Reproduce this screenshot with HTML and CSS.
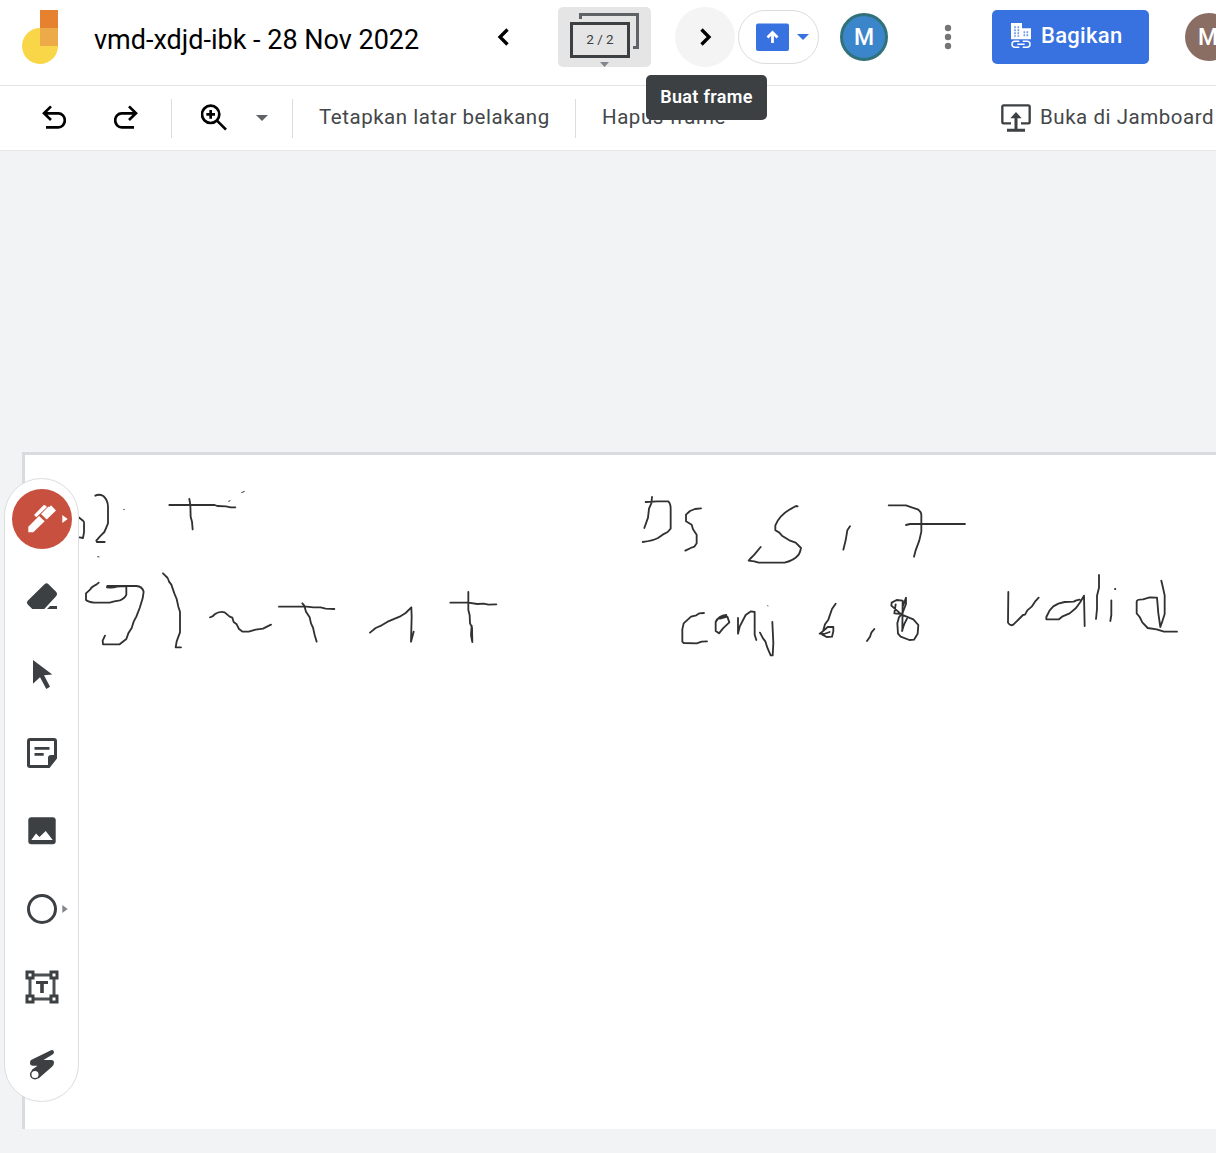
FILE: index.html
```html
<!DOCTYPE html>
<html lang="id">
<head>
<meta charset="utf-8">
<title>vmd-xdjd-ibk - 28 Nov 2022</title>
<link rel="stylesheet" href="styles.css">
</head>
<body>
<header class="header">
  <svg class="logo" width="36" height="55" viewBox="66 30 108 165">
    <path fill="#f8d648" d="M120 84H174V140A54 54 0 1 1 120 84Z"/>
    <path fill="#e6812f" d="M120 30H174V84H120Z"/>
    <path fill="#ecab48" d="M120 84H174V138H120Z"/>
  </svg>
  <h1 class="title">vmd-xdjd-ibk - 28 Nov 2022</h1>
  <button class="round" aria-label="Frame sebelumnya">
    <svg width="60" height="60" viewBox="0 0 60 60"><path class="chevron" d="M33.500 22.500L26 30L33.500 37.500"/></svg>
  </button>
  <button class="frames">
    <svg class="frames-art" width="93" height="60" viewBox="0 0 93 60">
      <path fill="none" stroke="#5f6368" stroke-width="3" d="M22.500 12V7.500H79.500V40.500H75"/>
      <rect x="13.500" y="16.500" width="57" height="33" fill="none" stroke="#3c4043" stroke-width="3"/>
      <path fill="#80868b" d="M42 55H51L46.500 60Z"/>
    </svg>
    <span class="frames-count">2 / 2</span>
  </button>
  <div class="next">
    <button class="round round-hover" aria-label="Buat frame">
      <svg width="60" height="60" viewBox="0 0 60 60"><path class="chevron" d="M26.500 22.500L34 30L26.500 37.500"/></svg>
    </button>
    <div class="tooltip">Buat frame</div>
  </div>
  <button class="present" aria-label="Presentasikan">
    <svg width="79" height="52" viewBox="0 0 79 52">
      <rect x="17" y="12.500" width="33" height="27.500" rx="2" fill="#3871e0"/>
      <path fill="none" stroke="#fff" stroke-width="2.800" d="M33.500 32V22M28.500 26.500L33.500 21.500L38.500 26.500"/>
      <path fill="#3871e0" d="M58 23H70L64 29Z"/>
    </svg>
  </button>
  <div class="avatar avatar-blue">M</div>
  <button class="more" aria-label="Lainnya">
    <svg width="60" height="60" viewBox="0 0 60 60" fill="#757575"><circle cx="30" cy="21" r="3.200"/><circle cx="30" cy="30" r="3.200"/><circle cx="30" cy="39" r="3.200"/></svg>
  </button>
  <button class="share">
    <svg width="20" height="26" viewBox="0 0 60 78">
      <path fill="#fff" d="M0 0H33V16H60V49H0Z"/>
      <path fill="none" stroke="#6f98e9" stroke-width="5" stroke-dasharray="6 3" d="M12 10V41M22 10V41M40 25V41M49 25V41"/>
      <path fill="none" stroke="#fff" stroke-width="4.500" d="M25 55H12A9 9 0 0 0 12 73H25M35 55H48A9 9 0 0 1 48 73H35M19 64H41"/>
    </svg>
    <span>Bagikan</span>
  </button>
  <div class="avatar avatar-brown">M</div>
</header>

<nav class="toolbar">
  <svg class="undo" width="24" height="24" viewBox="0 0 72 72"><path class="bold" d="M12 67H49A18.500 20 0 0 0 49 25H6M27 4L6 25L27 45"/></svg>
  <svg class="redo" width="24" height="24" viewBox="0 0 72 72"><path class="bold" d="M60 67H23A18.500 20 0 0 1 23 25H66M45 4L66 25L45 45"/></svg>
  <span class="divider divider-a"></span>
  <svg class="zoom" width="26" height="27" viewBox="0 0 78 81"><circle class="bold" cx="29" cy="31" r="26"/><path class="bold" d="M48 50L75 77M29 18V44M16 31H42"/></svg>
  <svg class="caret" width="12" height="6" viewBox="0 0 12 6"><path fill="#5f6368" d="M0 0H12L6 6Z"/></svg>
  <span class="divider divider-b"></span>
  <span class="action action-bg">Tetapkan latar belakang</span>
  <span class="divider divider-c"></span>
  <span class="action action-clear">Hapus frame</span>
  <svg class="jam" width="30" height="28" viewBox="0 0 90 84"><path fill="none" stroke="#3c4043" stroke-width="7" d="M30 58H8Q4 58 4 54V8Q4 4 8 4H82Q86 4 86 8V54Q86 58 82 58H60"/><path fill="none" stroke="#3c4043" stroke-width="9" d="M45 36V78M18 79H72"/><path fill="#3c4043" d="M28 43L45 24L62 43Z"/></svg>
  <span class="action action-jam">Buka di Jamboard</span>
</nav>

<main class="workspace">
  <section class="board">
    <svg class="ink" width="1191" height="674" viewBox="25 455 1191 674">
      <g transform="translate(0 440) scale(.33333)">
        <path d="M236 232L250 243Q253 245 252 255V277L249 294L238 292M286 167Q297 161 310 168Q324 181 324 200V250Q318 265 313 276L300 289L289 302L291 306H314M508 195H644L652 198L678 199L692 202H706M568 177L571 195L572 230L576 245L578 268M296 428L289 434Q274 441 271 448L258 460V480Q265 486 282 488H329L343 484L360 481Q374 476 379 464V438L350 440Q340 444 321 442L322 438H409Q427 439 431 455L428 475L419 504L409 530L401 545L395 564L385 580L379 597L359 613H309L308 602L315 587M489 400L496 407Q504 412 507 425L514 434L523 460L530 477L535 500L540 515V577L530 604L527 622H543"/>
        <path class="speck" d="M724 158L734 154M685 184L691 182M370 209L374 208M292 350L298 351"/>
      </g>
      <g transform="translate(190 560) scale(.33333)">
        <path d="M60 172Q68 171 74 163Q88 153 104 157L119 170L127 173L131 186L140 193L147 207L158 215L176 215L197 209L219 206L243 194M267 140H350L370 142L392 142L407 146L433 147M337 130L343 137L348 155L359 172L363 190L369 203L374 225L380 245M540 218L557 204L575 196L593 185L629 170L647 159L664 142L665 170L663 245L671 215M781 128H835L862 132L881 131L895 134L919 133M835 96V150L839 166L840 190L846 202L847 246L843 225L845 197"/>
      </g>
      <g transform="translate(630 480) scale(.33333)">
        <path d="M66 51L64 70L57 86L54 113L43 144M47 66L83 64H114Q122 70 122 86V146L113 156L98 164L84 174Q69 182 38 186M213 85L195 87L180 93L168 104V124L185 134L189 148L200 164V190L193 200L182 204L166 212M503 79L498 78L480 88Q448 107 436 136V151L448 158L456 167L478 181L497 188L513 204Q511 216 506 224Q493 241 464 248H386L373 244L356 242L360 237L373 224L392 201M660 139L652 151L647 181L640 209M776 76H828L845 82L863 88Q875 96 874 108V155L868 181L857 211L852 230M828 135L840 132H1005M222 399L208 400L199 406L183 410L161 430L157 448V485L161 489L200 490L215 485L231 484M289 405Q266 407 257 426V453L267 460L279 445L298 427L292 410L270 416M324 414V461L329 440L347 405L363 394L374 396V464L379 480M390 458L399 475L406 484L412 503L422 526H428L430 490L427 426M617 371L606 387L595 419L585 433L579 454L569 461L582 462L599 456M581 452L593 441H610V454L606 470L590 471L577 464M733 447L724 458L720 470L711 483"/>
        <path d="M816 453L822 434L831 416M817 452L818 362L800 360L785 368L784 377L815 404L850 418L865 435L863 461L852 479L838 480L812 470L804 461L802 430L807 412L818 398L828 372V353L819 378M816 402L793 400L797 373"/>
        <path class="speck" d="M412 377L415 378"/>
      </g>
      <g transform="translate(990 560) scale(.33333)">
        <path d="M55 96L54 188Q60 199 70 194L87 177L99 165L105 164L112 151L125 140L135 125L146 113M269 119L259 121L251 125L224 126L205 131L190 139L179 151L169 171V178H207L218 169L239 160L258 144L271 126L282 107L284 198M327 45V83L321 107V147L318 177M375 87L376 87M364 121V165L361 183M514 62L519 83L524 106V162L518 181L511 201L505 160L501 113L479 112L459 118Q440 118 440 125V160L449 171L457 187L473 204L500 208L522 215H561"/>
      </g>
    </svg>
  </section>
  <aside class="rail">
    <svg class="tool" viewBox="-37 -30 73 60"><circle r="30" fill="#c8503f"/><path fill="#fff" d="M-13.700 7.700L-3 -3L2.700 2.300L-8.700 13.300H-13.700ZM-1 -5L6.500 -12.500L7.500 -12L9 -13.700L14 -8.500L4.700 .5ZM-8 -4L1.500 -13.700Q2.500 -14.500 3.500 -13.500L5 -12L-5.700 -1.700ZM20.300 -4L25.700 0L20.300 4Z"/></svg>
    <svg class="tool" viewBox="-37 -30 73 60"><path d="M2.500 -12.800Q4.500 -14.500 6.500 -12.800L14.300 -5Q16 -3 14.300 -1L2.300 12H-9.700L-14.300 7.500Q-16 5.500 -14.300 3.700ZM5 12L8 9H15V12Z"/></svg>
    <svg class="tool" viewBox="-37 -30 73 60"><path d="M-9 -15L10.300 -.6L2 .3L8 11.700L4.300 14L-2 2.300L-9 8.700Z"/></svg>
    <svg class="tool" viewBox="-37 -30 73 60"><path class="line" d="M7.500 13.500H-12Q-13.500 13.500 -13.500 12V-12Q-13.500 -13.500 -12 -13.500H12Q13.500 -13.500 13.500 -12V4"/><path d="M-7.500 -6H7.500V-3.300H-7.500ZM-7.500 0H1.700V2.700H-7.500ZM6 15V5Q6 2 9 2H15V5.500L7.500 15Z"/></svg>
    <svg class="tool" viewBox="-37 -30 73 60"><rect x="-13.700" y="-13.700" width="27.400" height="27" rx="3"/><path fill="#fff" d="M-10.700 9L-6 2.500L-2.500 6L3.700 0L10.700 9Z"/></svg>
    <svg class="tool" viewBox="-37 -30 73 60"><circle class="line" r="13.500"/><path fill="#80868b" d="M20.300 -4L25.700 0L20.300 4Z"/></svg>
    <svg class="tool" viewBox="-37 -30 73 60"><path fill="none" stroke="#4c5054" stroke-width="3" d="M-12 -12H12V12H-12Z"/><path fill="#fff" stroke="#3c4043" stroke-width="3" d="M-15 -15H-9V-9H-15ZM9 -15H15V-9H9ZM-15 9H-9V15H-15ZM9 9H15V15H9Z"/><path d="M-6 -6H6V-3H1.800V6H-1.800V-3H-6Z"/></svg>
    <svg class="tool" viewBox="-37 -30 73 60"><path d="M-11 -5L9 -14.800Q12 -15.500 12 -12.500Q12 -11.500 10.500 -10.500L1.500 -5H9.500Q12 -5 12 -2.500Q12 0 10 1.700L-3.500 13.500L-10.500 5L-4.500 .8H-9Q-12 .8 -12 -2Q-12 -4 -11 -5Z"/><circle cx="-7" cy="9.500" r="4.300" fill="#fff" stroke="#3c4043" stroke-width="1.500"/></svg>
  </aside>
</main>
</body>
</html>
```
FILE: styles.css
```css
* { box-sizing: border-box; }
body {
  margin: 0;
  height: 1153px;
  overflow: hidden;
  display: flex;
  flex-direction: column;
  background: #f1f3f5;
  font-family: Roboto, "Liberation Sans", sans-serif;
}
button {
  border: 0;
  padding: 0;
  background: none;
  font: inherit;
  display: block;
}
svg { display: block; flex: none; }

.header {
  flex: none;
  height: 86px;
  padding: 0 0 11px 22px;
  display: flex;
  align-items: center;
  background: #fff;
  border-bottom: 1px solid #e3e4e6;
}
.header > * { flex: none; }
.logo { margin-top: 1px; }
.title {
  width: 380px;
  margin: 6px 0 0 36px;
  font-size: 27px;
  line-height: 36px;
  font-weight: 400;
  color: #000;
  white-space: nowrap;
}
.round { width: 60px; height: 60px; border-radius: 50%; }
.round-hover { background: #f4f4f4; }
.chevron { fill: none; stroke: #000; stroke-width: 3.3; }
.frames {
  display: grid;
  width: 93px;
  height: 60px;
  margin: 0 24px;
  border-radius: 5px;
  background: #e5e5e5;
}
.frames-art, .frames-count { grid-area: 1 / 1; }
.frames-count {
  width: 84px;
  padding-top: 2px;
  text-align: center;
  line-height: 60px;
  font-size: 13.5px;
  color: #3c4043;
}
.next { position: relative; }
.tooltip {
  position: absolute;
  z-index: 2;
  left: -29px;
  top: 68px;
  width: 121px;
  height: 45px;
  border-radius: 5px;
  background: #3c4043;
  color: #fff;
  font-size: 18px;
  font-weight: 600;
  line-height: 43px;
  letter-spacing: .35px;
  text-align: center;
  white-space: nowrap;
}
.present {
  width: 81px;
  height: 54px;
  margin: 0 21px 0 3px;
  border: 1px solid #dadce0;
  border-radius: 27px;
}
.avatar {
  width: 48px;
  height: 48px;
  border-radius: 50%;
  color: #fff;
  font-size: 23px;
  line-height: 48px;
  font-weight: 500;
  text-align: center;
}
.avatar-blue { background: #3b85cb; border: 3px solid #31727a; line-height: 43px; }
.avatar-brown { background: #8a6e64; line-height: 50px; padding-right: 2px; }
.more { margin: 0 14px 0 30px; }
.share {
  display: flex;
  align-items: center;
  gap: 10px;
  width: 157px;
  height: 54px;
  margin-right: 36px;
  padding: 0 0 2px 19px;
  border-radius: 5px;
  background: #3871e0;
  color: #fff;
  font-size: 22px;
  font-weight: 500;
  letter-spacing: .3px;
}
.share span { padding-bottom: 2px; }

.toolbar {
  flex: none;
  height: 65px;
  padding-left: 42px;
  display: flex;
  align-items: center;
  background: #fff;
  border-bottom: 1px solid #e6e8ea;
}
.bold { fill: none; stroke: #000; stroke-width: 8; }
.undo, .redo { margin-bottom: 2px; }
.redo { margin-left: 48px; }
.divider { flex: none; width: 1px; height: 39px; background: #dadce0; }
.divider-a { margin-left: 33px; }
.zoom { margin: 0 0 2px 29px; }
.caret { margin-left: 29px; }
.divider-b { margin-left: 24px; }
.action {
  flex: none;
  font-size: 20.5px;
  line-height: 28px;
  letter-spacing: .54px;
  color: #444749;
  white-space: nowrap;
  margin-bottom: 3px;
}
.action-bg { width: 230px; margin-left: 26px; }
.divider-c { margin-left: 26px; }
.action-clear { width: 130px; margin-left: 26px; }
.jam { margin-left: 269px; }
.action-jam { width: 173px; margin-left: 9px; }

.workspace { position: relative; flex: 1; padding: 301px 0 24px 22px; }
.board {
  height: 677px;
  background: #fff;
  border: solid #d9dbdf;
  border-width: 3px 0 0 3px;
  overflow: hidden;
}
.ink {
  fill: none;
  stroke: #303132;
  stroke-width: 5.5;
  stroke-linecap: round;
  stroke-linejoin: round;
}
.speck { stroke-width: 3; stroke-linecap: butt; }
.rail {
  position: absolute;
  left: 4px;
  top: 327px;
  width: 75px;
  height: 624px;
  padding-top: 10px;
  display: flex;
  flex-direction: column;
  gap: 18px;
  background: #fff;
  border: 1px solid #dadce0;
  border-radius: 38px;
}
.tool { width: 73px; height: 60px; fill: #3c4043; }
.line { fill: none; stroke: #3c4043; stroke-width: 3; }
```
